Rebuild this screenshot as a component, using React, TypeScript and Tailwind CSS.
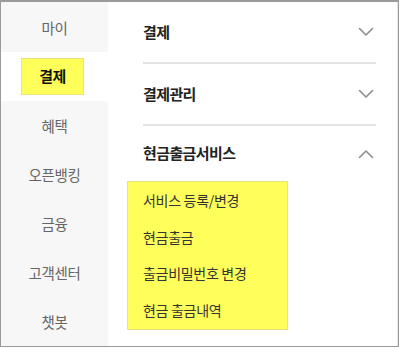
const font = { fontFamily: '"Noto Sans CJK KR", "Noto Sans", sans-serif' }

const sideMenu = ['마이', '결제', '혜택', '오픈뱅킹', '금융', '고객센터', '챗봇']
const subMenu = ['서비스 등록/변경', '현금출금', '출금비밀번호 변경', '현금 출금내역']

function Chevron({ up }: { up?: boolean }) {
  return (
    <svg width="16" height="10" viewBox="0 0 16 10" fill="none" className="mr-[2px]">
      <path
        d={up ? 'M1.5 8.5L8 2l6.5 6.5' : 'M1.5 1.5L8 8l6.5-6.5'}
        stroke="#8c8c8c"
        strokeWidth="1.6"
        strokeLinecap="round"
        strokeLinejoin="round"
      />
    </svg>
  )
}

export default function App() {
  return (
    <div style={font} className="w-[400px] h-[348px] overflow-hidden bg-white">
      <div className="w-[399px] h-[347px] flex border border-[#9a9a9a] border-t-2">
        {/* left category menu */}
        <div className="w-[107px] bg-[#f7f7f7] flex flex-col pt-[1px]">
          {sideMenu.map((m) =>
            m === '결제' ? (
              <div key={m} className="h-[50px] bg-white flex items-center pl-[20px]">
                <div className="w-[63px] h-[37px] bg-[#ffff5c] border border-[#ece27a] flex items-center justify-center">
                  <span className="text-[15px] font-bold text-[#111] tracking-[-0.5px]">{m}</span>
                </div>
              </div>
            ) : (
              <div key={m} className="h-[50px] flex items-center justify-center">
                <span className="text-[14.5px] text-[#666] tracking-[-0.4px]">{m}</span>
              </div>
            )
          )}
        </div>

        {/* right accordion */}
        <div className="flex-1 flex border-r border-[#e6e6e6]">
          <div className="w-[268px] pl-[35px] flex flex-col">
            <div className="h-[62px] flex items-center justify-between border-b-2 border-[#e3e3e3]">
              <span className="text-[15px] font-bold text-[#222] tracking-[-0.6px]">결제</span>
              <Chevron />
            </div>
            <div className="h-[62px] flex items-center justify-between border-b-2 border-[#e3e3e3]">
              <span className="text-[15px] font-bold text-[#222] tracking-[-0.6px]">결제관리</span>
              <Chevron />
            </div>
            <div className="h-[55px] flex items-center justify-between">
              <span className="text-[15px] font-bold text-[#222] tracking-[-0.6px]">현금출금서비스</span>
              <Chevron up />
            </div>
            <div className="-ml-4 w-[161px] bg-[#ffff5c] border border-[#ece27a]">
              {subMenu.map((s) => (
                <div key={s} className="h-[36.8px] flex items-center pl-[15px]">
                  <span className="text-[14px] text-[#333] tracking-[-0.3px]">{s}</span>
                </div>
              ))}
            </div>
          </div>
        </div>
      </div>
    </div>
  )
}
